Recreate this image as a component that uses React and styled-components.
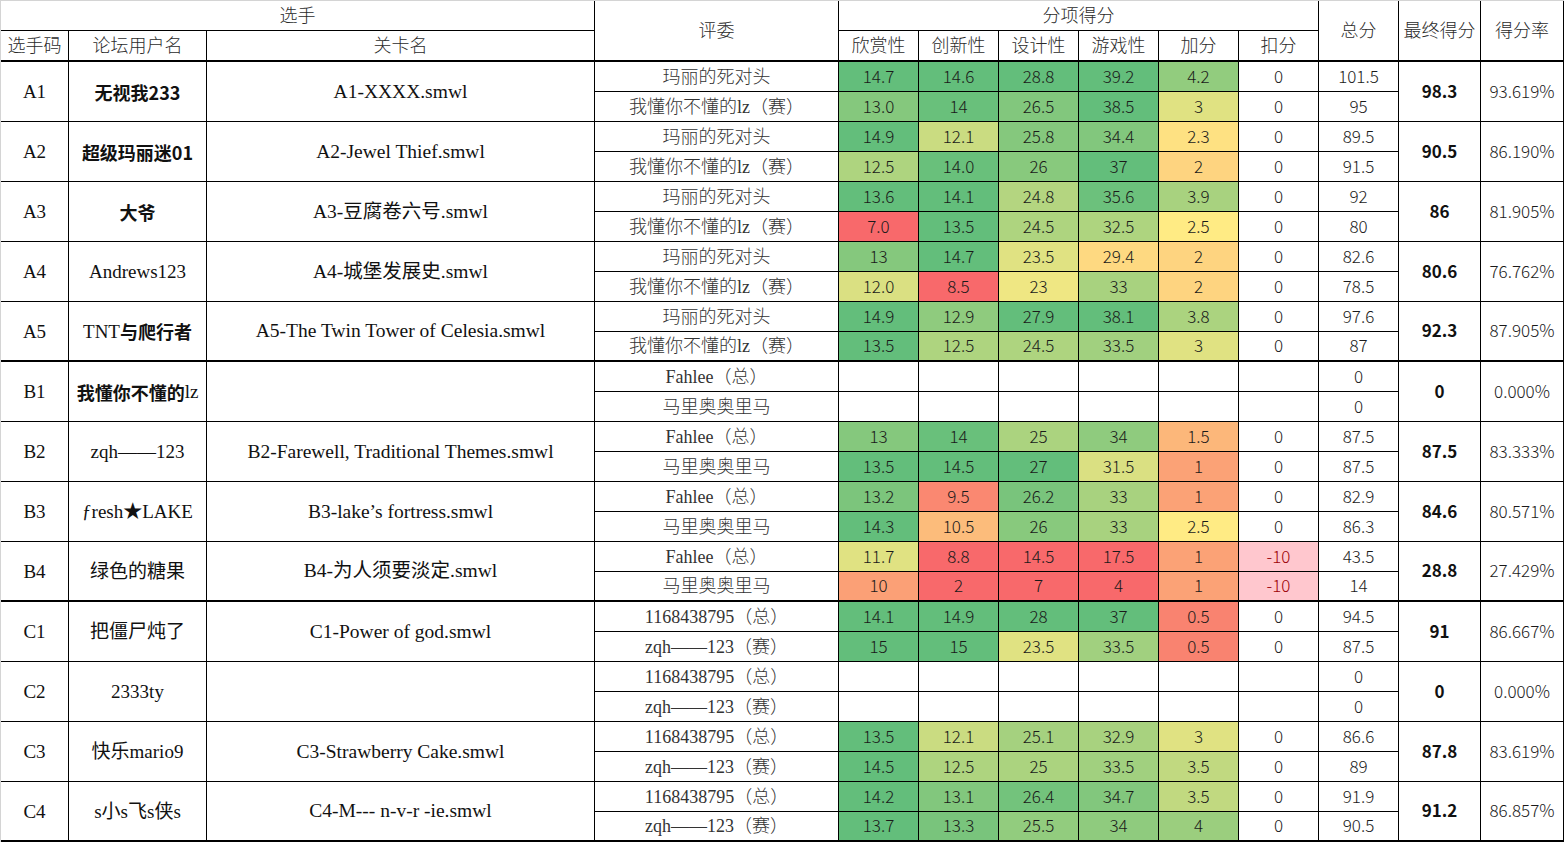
import React from 'react';
import styled, { createGlobalStyle } from 'styled-components';

const GlobalStyle = createGlobalStyle`
  html, body { margin: 0; padding: 0; background: #fff; }
  body { font-family: "Noto Sans CJK SC", "Noto Sans", sans-serif; }
`;

const SERIF = '"Liberation Serif", "Noto Sans CJK SC", serif';
const SANS = '"Noto Sans CJK SC", "Noto Sans", sans-serif';

const RED = [248, 105, 107];
const YEL = [255, 235, 132];
const GRN = [99, 190, 123];
const mix = (a, b, u) => a.map((v, i) => Math.round(v + (b[i] - v) * u));
const scaleColor = (t) => {
  const c = t <= 0.5 ? mix(RED, YEL, t / 0.5) : mix(YEL, GRN, (t - 0.5) / 0.5);
  return `rgb(${c[0]}, ${c[1]}, ${c[2]})`;
};

const Sheet = styled.div`
  display: grid;
  grid-template-columns: 68px 138px 388px 244px repeat(6, 80px) 80px 82px 83px;
  grid-template-rows: 30px 31px;
  grid-auto-rows: 30px;
  width: 1564px;
  box-sizing: border-box;
  border-top: 1px solid #d4d4d4;
  border-left: 1px solid #d4d4d4;
`;

const Cell = styled.div`
  box-sizing: border-box;
  display: flex;
  align-items: center;
  justify-content: center;
  border-right: 1px solid #000;
  border-bottom: ${(p) => (p.$thick ? '2px' : '1px')} solid #000;
  background: ${(p) => p.$bg || '#fff'};
  grid-row: ${(p) => (p.$rows ? `span ${p.$rows}` : 'auto')};
  grid-column: ${(p) => (p.$cols ? `span ${p.$cols}` : 'auto')};
  white-space: nowrap;
  overflow: hidden;
  line-height: 1;
`;

const HeadCell = styled(Cell)`
  font-family: ${SANS};
  font-weight: 300;
  font-size: 18px;
  color: #2b2b2b;
  padding-bottom: 4px;
`;

const CodeCell = styled(Cell)`
  font-family: ${SERIF};
  font-size: 19px;
  color: #111;
`;

const NameCell = styled(Cell)`
  font-family: ${SERIF};
  font-size: 19px;
  color: #111;
`;

const NamePart = styled.span`
  font-family: ${(p) => (p.$strong ? SANS : SERIF)};
  font-weight: ${(p) => (p.$strong ? 700 : 400)};
  font-size: ${(p) => (p.$strong ? '18px' : '19px')};
`;

const LevelCell = styled(Cell)`
  font-family: ${SERIF};
  font-size: 19.5px;
  color: #111;
`;

const JudgeCell = styled(Cell)`
  font-family: ${SERIF};
  font-size: 18px;
  font-weight: 300;
  color: #333;
`;

const ScoreCell = styled(Cell)`
  font-family: ${SANS};
  font-weight: 300;
  font-size: 17px;
  color: ${(p) => p.$ink || '#1a1a1a'};
  padding-bottom: 3px;
`;

const FinalCell = styled(Cell)`
  font-family: ${SANS};
  font-weight: 700;
  font-size: 17px;
  color: #111;
  padding-bottom: 3px;
`;

const groups = [
  {
    code: 'A1', name: [['无视我233', true]], level: 'A1-XXXX.smwl',
    judges: ['玛丽的死对头', '我懂你不懂的lz（赛）'],
    rows: [
      [[['14.7', 1], ['14.6', 1], ['28.8', 1], ['39.2', 1], ['4.2', 0.85]], '0', '101.5'],
      [[['13.0', 0.89], ['14', 0.98], ['26.5', 0.9], ['38.5', 1], ['3', 0.6]], '0', '95'],
    ],
    final: '98.3', rate: '93.619%',
  },
  {
    code: 'A2', name: [['超级玛丽迷01', true]], level: 'A2-Jewel Thief.smwl',
    judges: ['玛丽的死对头', '我懂你不懂的lz（赛）'],
    rows: [
      [[['14.9', 1], ['12.1', 0.67], ['25.8', 0.89], ['34.4', 0.9], ['2.3', 0.46]], '0', '89.5'],
      [[['12.5', 0.76], ['14.0', 0.98], ['26', 0.88], ['37', 1], ['2', 0.41]], '0', '91.5'],
    ],
    final: '90.5', rate: '86.190%',
  },
  {
    code: 'A3', name: [['大爷', true]], level: 'A3-豆腐卷六号.smwl',
    judges: ['玛丽的死对头', '我懂你不懂的lz（赛）'],
    rows: [
      [[['13.6', 1], ['14.1', 1], ['24.8', 0.74], ['35.6', 0.97], ['3.9', 0.78]], '0', '92'],
      [[['7.0', 0], ['13.5', 1], ['24.5', 0.76], ['32.5', 0.76], ['2.5', 0.5]], '0', '80'],
    ],
    final: '86', rate: '81.905%',
  },
  {
    code: 'A4', name: [['Andrews123', false]], level: 'A4-城堡发展史.smwl',
    judges: ['玛丽的死对头', '我懂你不懂的lz（赛）'],
    rows: [
      [[['13', 0.89], ['14.7', 1], ['23.5', 0.6], ['29.4', 0.43], ['2', 0.41]], '0', '82.6'],
      [[['12.0', 0.62], ['8.5', 0], ['23', 0.55], ['33', 0.78], ['2', 0.41]], '0', '78.5'],
    ],
    final: '80.6', rate: '76.762%',
  },
  {
    code: 'A5', name: [['TNT', false], ['与爬行者', true]], level: 'A5-The Twin Tower of Celesia.smwl',
    judges: ['玛丽的死对头', '我懂你不懂的lz（赛）'],
    rows: [
      [[['14.9', 1], ['12.9', 0.86], ['27.9', 1], ['38.1', 1], ['3.8', 0.77]], '0', '97.6'],
      [[['13.5', 1], ['12.5', 0.76], ['24.5', 0.76], ['33.5', 0.8], ['3', 0.6]], '0', '87'],
    ],
    final: '92.3', rate: '87.905%', thick: true,
  },
  {
    code: 'B1', name: [['我懂你不懂的', true], ['lz', false]], level: '',
    judges: ['Fahlee（总）', '马里奥奥里马'],
    rows: [
      [null, '', '0'],
      [null, '', '0'],
    ],
    final: '0', rate: '0.000%',
  },
  {
    code: 'B2', name: [['zqh——123', false]], level: 'B2-Farewell, Traditional Themes.smwl',
    judges: ['Fahlee（总）', '马里奥奥里马'],
    rows: [
      [[['13', 0.89], ['14', 0.98], ['25', 0.77], ['34', 0.86], ['1.5', 0.3]], '0', '87.5'],
      [[['13.5', 1], ['14.5', 1], ['27', 1], ['31.5', 0.62], ['1', 0.22]], '0', '87.5'],
    ],
    final: '87.5', rate: '83.333%',
  },
  {
    code: 'B3', name: [['ƒresh★LAKE', false]], level: 'B3-lake’s fortress.smwl',
    judges: ['Fahlee（总）', '马里奥奥里马'],
    rows: [
      [[['13.2', 0.92], ['9.5', 0.12], ['26.2', 0.93], ['33', 0.78], ['1', 0.22]], '0', '82.9'],
      [[['14.3', 1], ['10.5', 0.32], ['26', 0.88], ['33', 0.78], ['2.5', 0.5]], '0', '86.3'],
    ],
    final: '84.6', rate: '80.571%',
  },
  {
    code: 'B4', name: [['绿色的糖果', false]], level: 'B4-为人须要淡定.smwl',
    judges: ['Fahlee（总）', '马里奥奥里马'],
    rows: [
      [[['11.7', 0.6], ['8.8', 0], ['14.5', 0], ['17.5', 0], ['1', 0.22]], '-10', '43.5'],
      [[['10', 0.21], ['2', 0], ['7', 0], ['4', 0], ['1', 0.22]], '-10', '14'],
    ],
    final: '28.8', rate: '27.429%', thick: true,
  },
  {
    code: 'C1', name: [['把僵尸炖了', false]], level: 'C1-Power of god.smwl',
    judges: ['1168438795（总）', 'zqh——123（赛）'],
    rows: [
      [[['14.1', 1], ['14.9', 1], ['28', 1], ['37', 1], ['0.5', 0.1]], '0', '94.5'],
      [[['15', 1], ['15', 1], ['23.5', 0.6], ['33.5', 0.8], ['0.5', 0.1]], '0', '87.5'],
    ],
    final: '91', rate: '86.667%',
  },
  {
    code: 'C2', name: [['2333ty', false]], level: '',
    judges: ['1168438795（总）', 'zqh——123（赛）'],
    rows: [
      [null, '', '0'],
      [null, '', '0'],
    ],
    final: '0', rate: '0.000%',
  },
  {
    code: 'C3', name: [['快乐mario9', false]], level: 'C3-Strawberry Cake.smwl',
    judges: ['1168438795（总）', 'zqh——123（赛）'],
    rows: [
      [[['13.5', 1], ['12.1', 0.67], ['25.1', 0.79], ['32.9', 0.78], ['3', 0.6]], '0', '86.6'],
      [[['14.5', 1], ['12.5', 0.76], ['25', 0.77], ['33.5', 0.8], ['3.5', 0.7]], '0', '89'],
    ],
    final: '87.8', rate: '83.619%',
  },
  {
    code: 'C4', name: [['s小s飞s侠s', false]], level: 'C4-M--- n-v-r -ie.smwl',
    judges: ['1168438795（总）', 'zqh——123（赛）'],
    rows: [
      [[['14.2', 1], ['13.1', 0.9], ['26.4', 0.95], ['34.7', 0.9], ['3.5', 0.7]], '0', '91.9'],
      [[['13.7', 1], ['13.3', 0.93], ['25.5', 0.85], ['34', 0.86], ['4', 0.82]], '0', '90.5'],
    ],
    final: '91.2', rate: '86.857%', thick: true,
  },
];

function JudgeRow({ judge, row, thick }) {
  const [scores, ded, total] = row;
  const cells = scores || [['', null], ['', null], ['', null], ['', null], ['', null]];
  const pink = ded === '-10';
  return (
    <>
      <JudgeCell $thick={thick}>{judge}</JudgeCell>
      {cells.map(([v, t], i) => (
        <ScoreCell key={i} $thick={thick} $bg={t === null ? undefined : scaleColor(t)}>
          {v}
        </ScoreCell>
      ))}
      <ScoreCell $thick={thick} $bg={pink ? '#FFC7CE' : undefined} $ink={pink ? '#9C0006' : undefined}>
        {ded}
      </ScoreCell>
      <ScoreCell $thick={thick}>{total}</ScoreCell>
    </>
  );
}

function Group({ g }) {
  return (
    <>
      <CodeCell $rows={2} $thick={g.thick}>{g.code}</CodeCell>
      <NameCell $rows={2} $thick={g.thick}>
        {g.name.map(([t, s], i) => (
          <NamePart key={i} $strong={s}>{t}</NamePart>
        ))}
      </NameCell>
      <LevelCell $rows={2} $thick={g.thick}>{g.level}</LevelCell>
      <JudgeRow judge={g.judges[0]} row={g.rows[0]} />
      <FinalCell $rows={2} $thick={g.thick}>{g.final}</FinalCell>
      <ScoreCell $rows={2} $thick={g.thick}>{g.rate}</ScoreCell>
      <JudgeRow judge={g.judges[1]} row={g.rows[1]} thick={g.thick} />
    </>
  );
}

export default function App() {
  return (
    <>
      <GlobalStyle />
      <Sheet>
        <HeadCell $cols={3}>选手</HeadCell>
        <HeadCell $rows={2} $thick>评委</HeadCell>
        <HeadCell $cols={6}>分项得分</HeadCell>
        <HeadCell $rows={2} $thick>总分</HeadCell>
        <HeadCell $rows={2} $thick>最终得分</HeadCell>
        <HeadCell $rows={2} $thick>得分率</HeadCell>
        <HeadCell $thick>选手码</HeadCell>
        <HeadCell $thick>论坛用户名</HeadCell>
        <HeadCell $thick>关卡名</HeadCell>
        <HeadCell $thick>欣赏性</HeadCell>
        <HeadCell $thick>创新性</HeadCell>
        <HeadCell $thick>设计性</HeadCell>
        <HeadCell $thick>游戏性</HeadCell>
        <HeadCell $thick>加分</HeadCell>
        <HeadCell $thick>扣分</HeadCell>
        {groups.map((g) => (
          <Group key={g.code} g={g} />
        ))}
      </Sheet>
    </>
  );
}
